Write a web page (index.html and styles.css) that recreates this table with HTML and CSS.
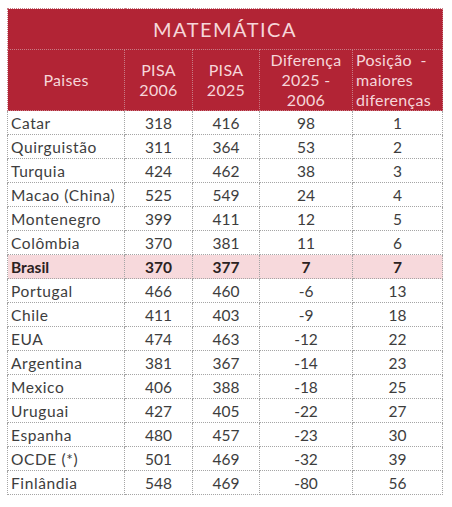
FILE: index.html
```html
<!DOCTYPE html>
<html lang="pt">
<head>
    <meta charset="UTF-8">
    <title>Matemática - PISA</title>
    <link rel="stylesheet" href="styles.css">
</head>
<body>
    <table class="pisa">
        <colgroup>
            <col class="c-pais">
            <col class="c-2006">
            <col class="c-2025">
            <col class="c-dif">
            <col class="c-pos">
        </colgroup>
        <thead>
            <tr class="title-row">
                <th colspan="5">MATEMÁTICA</th>
            </tr>
            <tr class="head-row">
                <th>Paises</th>
                <th>PISA<br>2006</th>
                <th>PISA<br>2025</th>
                <th>Diferença<br>2025 -<br>2006</th>
                <th class="pos">Posição &nbsp;-<br>maiores<br>diferenças</th>
            </tr>
        </thead>
        <tbody>
            <tr><td>Catar</td><td>318</td><td>416</td><td>98</td><td>1</td></tr>
            <tr><td>Quirguistão</td><td>311</td><td>364</td><td>53</td><td>2</td></tr>
            <tr><td>Turquia</td><td>424</td><td>462</td><td>38</td><td>3</td></tr>
            <tr><td>Macao (China)</td><td>525</td><td>549</td><td>24</td><td>4</td></tr>
            <tr><td>Montenegro</td><td>399</td><td>411</td><td>12</td><td>5</td></tr>
            <tr><td>Colômbia</td><td>370</td><td>381</td><td>11</td><td>6</td></tr>
            <tr class="brasil"><td>Brasil</td><td>370</td><td>377</td><td>7</td><td>7</td></tr>
            <tr><td>Portugal</td><td>466</td><td>460</td><td>-6</td><td>13</td></tr>
            <tr><td>Chile</td><td>411</td><td>403</td><td>-9</td><td>18</td></tr>
            <tr><td>EUA</td><td>474</td><td>463</td><td>-12</td><td>22</td></tr>
            <tr><td>Argentina</td><td>381</td><td>367</td><td>-14</td><td>23</td></tr>
            <tr><td>Mexico</td><td>406</td><td>388</td><td>-18</td><td>25</td></tr>
            <tr><td>Uruguai</td><td>427</td><td>405</td><td>-22</td><td>27</td></tr>
            <tr><td>Espanha</td><td>480</td><td>457</td><td>-23</td><td>30</td></tr>
            <tr><td>OCDE (*)</td><td>501</td><td>469</td><td>-32</td><td>39</td></tr>
            <tr><td>Finlândia</td><td>548</td><td>469</td><td>-80</td><td>56</td></tr>
        </tbody>
    </table>
</body>
</html>
```
FILE: styles.css
```css
/* General */
body {
    margin: 0;
    padding: 8px 0 0 7px;
    background: #fff;
    font-family: Lato, "Open Sans", sans-serif;
    color: #3d3d3d;
}

/* Table */
.pisa {
    border-collapse: collapse;
    table-layout: fixed;
    width: 435px;
}

.c-pais { width: 117px; }
.c-2006 { width: 68px; }
.c-2025 { width: 67px; }
.c-dif { width: 93px; }
.c-pos { width: 90px; }

.pisa th,
.pisa td {
    border: 1px dotted #a5a5a5;
    padding: 0;
}

/* Header */
.pisa thead th {
    background-color: #b22435;
    color: #f6d6d9;
    font-weight: normal;
    border-color: #c97c86;
}

.title-row th {
    height: 40px;
    font-size: 20px;
    letter-spacing: 1.5px;
    text-align: center;
}

.head-row th {
    height: 60px;
    font-size: 16px;
    line-height: 20px;
    letter-spacing: 0.3px;
    text-align: center;
}

.head-row th.pos {
    text-align: left;
    padding-left: 3px;
}

/* Body rows */
.pisa td {
    height: 23px;
    font-size: 15.5px;
    text-align: center;
}

.pisa td:first-child {
    text-align: left;
    padding-left: 3px;
    letter-spacing: 0.6px;
}

.brasil td {
    background-color: #f7d9dc;
    font-weight: bold;
    color: #2b2222;
}

.brasil td:first-child {
    letter-spacing: 0;
}
```
